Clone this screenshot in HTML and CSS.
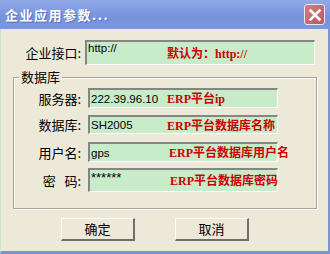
FILE: index.html
```html
<!DOCTYPE html>
<html lang="zh">
<head>
  <meta charset="UTF-8">
  <title>企业应用参数</title>
  <link rel="stylesheet" href="styles.css">
</head>
<body>
  <div class="window">
    <div class="titlebar">
      <span class="title">企业应用参数...</span>
      <span class="close">
        <svg width="14" height="14" viewBox="0 0 14 14"><path d="M2.5 2.5 L11.5 11.5 M11.5 2.5 L2.5 11.5" stroke="#fff" stroke-width="2.6" stroke-linecap="square"/></svg>
      </span>
    </div>
    <div class="client">
      <div class="row top-row">
        <label class="lbl">企业接口:</label>
        <div class="field wide">
          <span class="val">http://</span>
          <span class="hint">默认为：http://</span>
        </div>
      </div>

      <div class="group">
        <span class="legend">数据库</span>
        <div class="row r1">
          <label class="lbl">服务器:</label>
          <div class="field"><span class="val">222.39.96.10</span><span class="hint">ERP平台ip</span></div>
        </div>
        <div class="row r2">
          <label class="lbl">数据库:</label>
          <div class="field"><span class="val">SH2005</span><span class="hint">ERP平台数据库名称</span></div>
        </div>
        <div class="row r3">
          <label class="lbl">用户名:</label>
          <div class="field"><span class="val">gps</span><span class="hint">ERP平台数据库用户名</span></div>
        </div>
        <div class="row r4">
          <label class="lbl">密&nbsp;&nbsp;&nbsp;码:</label>
          <div class="field tall"><span class="val pw">******</span><span class="hint">ERP平台数据库密码</span></div>
        </div>
      </div>

      <div class="buttons">
        <button class="btn">确定</button>
        <button class="btn">取消</button>
      </div>
    </div>
  </div>
</body>
</html>
```

FILE: styles.css
```css
body {
  margin: 0;
  background: #fff;
  font-family: "Noto Sans CJK SC", sans-serif;
}
.window {
  width: 330px;
  height: 254px;
  display: flex;
  flex-direction: column;
}
.titlebar {
  height: 29px;
  background: linear-gradient(#90aae8, #7692dc 60%, #7c97dd);
  display: flex;
  align-items: center;
  justify-content: space-between;
  padding: 0 5px 0 5px;
}
.title {
  color: #fff;
  font-weight: bold;
  font-size: 13px;
  letter-spacing: 1.5px;
  text-shadow: 1px 1px 0 #5a72b8;
}
.close {
  width: 19px;
  height: 19px;
  border: 1px solid #e8e8f0;
  border-radius: 3px;
  background: linear-gradient(135deg, #d27c82, #b85860);
  display: flex;
  align-items: center;
  justify-content: center;
}
.client {
  flex: 1;
  background: #ece9d8;
  border-left: 1px solid #c8e6c8;
  border-right: 2px solid #7b93d6;
  border-bottom: 3px solid #7b93d6;
}
.row {
  display: flex;
  align-items: center;
}
.lbl {
  font-size: 13px;
  color: #000;
  text-align: right;
  white-space: nowrap;
}
.top-row {
  margin-top: 11px;
}
.top-row .lbl {
  width: 80px;
  margin-right: 4px;
}
.field {
  box-sizing: border-box;
  background: #c8ebc9;
  border-top: 2px solid #858585;
  border-left: 2px solid #858585;
  border-right: 1px solid #fff;
  border-bottom: 1px solid #fff;
  display: flex;
  align-items: center;
  width: 190px;
  height: 20px;
  position: relative;
}
.field.wide {
  width: 230px;
  height: 25px;
  align-items: flex-start;
}
.field.tall {
  height: 24px;
  align-items: flex-start;
}
.val {
  font-family: "Liberation Sans", sans-serif;
  font-size: 11.5px;
  padding-left: 1px;
  color: #000;
}
.pw {
  font-size: 13px;
}
.hint {
  position: absolute;
  left: 77px;
  top: 1px;
  white-space: nowrap;
  color: #cc0000;
  font-family: "Liberation Serif", "Noto Sans CJK SC", serif;
  font-weight: bold;
  font-size: 12px;
  line-height: 16px;
}
.wide .hint {
  left: 80px;
  top: 4px;
}
.r3 .hint { left: 79px; }
.r4 .hint { left: 80px; top: 3px; }
.group {
  margin: 12px 11px 0 12px;
  height: 132px;
  box-sizing: border-box;
  border: 1px solid #a8a498;
  box-shadow: inset 1px 1px 0 #fff, 1px 1px 0 #fff;
  position: relative;
}
.legend {
  position: absolute;
  top: -10px;
  left: 5px;
  padding: 0 2px;
  background: #ece9d8;
  font-size: 13px;
  line-height: 18px;
}
.group .lbl {
  width: 67px;
  margin-right: 7px;
}
.r1 { margin-top: 10px; }
.r2 { margin-top: 7px; height: 19px; }
.r3 { margin-top: 8px; }
.r4 { margin-top: 6px; }
.r2 .field { height: 19px; }
.buttons {
  display: flex;
  gap: 40px;
  margin: 9px 0 0 60px;
}
.btn {
  width: 74px;
  height: 23px;
  background: #ece9d8;
  border-top: 1px solid #fff;
  border-left: 1px solid #fff;
  border-right: 2px solid #6e6e6e;
  border-bottom: 2px solid #6e6e6e;
  font-family: "Noto Sans CJK SC", sans-serif;
  font-size: 13px;
  padding: 0;
  line-height: 18px;
}
```
